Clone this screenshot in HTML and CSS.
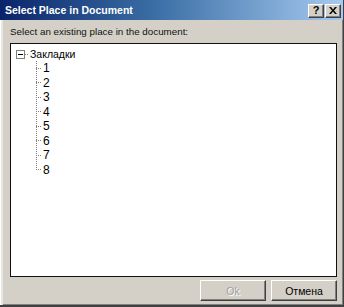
FILE: index.html
```html
<!DOCTYPE html>
<html>
<head>
<meta charset="utf-8">
<link rel="stylesheet" href="styles.css">
</head>
<body>
<div class="window">
  <div class="titlebar">
    <span class="title">Select Place in Document</span>
    <div class="tb-buttons">
      <span class="tb-btn">?</span>
      <span class="tb-btn close">
        <svg width="8" height="7" viewBox="0 0 8 7"><path d="M0 0h2l2 2.5L6 0h2L5 3.5 8 7H6L4 4.5 2 7H0l3-3.5z" fill="#000"/></svg>
      </span>
    </div>
  </div>
  <div class="body">
    <div class="label">Select an existing place in the document:</div>
    <div class="tree">
      <div class="root">
        <span class="pm"><span class="minus"></span></span><span class="hdash"></span><span class="root-text">Закладки</span>
      </div>
      <ul class="children">
        <li><span class="hdash short"></span>1</li>
        <li><span class="hdash short"></span>2</li>
        <li><span class="hdash short"></span>3</li>
        <li><span class="hdash short"></span>4</li>
        <li><span class="hdash short"></span>5</li>
        <li><span class="hdash short"></span>6</li>
        <li><span class="hdash short"></span>7</li>
        <li><span class="hdash short"></span>8</li>
      </ul>
    </div>
    <div class="buttons">
      <button class="btn" disabled>Ok</button>
      <button class="btn">Отмена</button>
    </div>
  </div>
</div>
</body>
</html>
```
FILE: styles.css
```css
* { box-sizing: border-box; }
html, body { margin: 0; padding: 0; }
body {
  width: 344px;
  height: 307px;
  overflow: hidden;
  font-family: "Liberation Sans", Arial, sans-serif;
  font-size: 10px;
  color: #000;
  background: #d4d0c8;
}
.window {
  width: 344px;
  height: 307px;
  display: flex;
  flex-direction: column;
  background: #d4d0c8;
  border-right: 1px solid #404040;
  border-bottom: 2px solid #404040;
  box-shadow: inset -1px -1px 0 #808080;
}
.titlebar {
  height: 20px;
  flex: 0 0 20px;
  display: flex;
  align-items: center;
  justify-content: space-between;
  padding: 0 2px 0 5px;
  background: linear-gradient(to right, #0a246a 0%, #3a6ea5 45%, #a6caf0 100%);
}
.title {
  color: #fff;
  font-weight: bold;
  font-size: 10.5px;
}
.tb-buttons { display: flex; gap: 1px; margin-top: 1px; }
.tb-btn {
  width: 16px;
  height: 14px;
  background: #d4d0c8;
  display: flex;
  align-items: center;
  justify-content: center;
  font-weight: bold;
  font-size: 11px;
  line-height: 1;
  border-top: 1px solid #fff;
  border-left: 1px solid #fff;
  border-right: 1px solid #404040;
  border-bottom: 1px solid #404040;
  box-shadow: inset -1px -1px 0 #808080;
}
.body {
  flex: 1;
  display: flex;
  flex-direction: column;
  padding: 5px 5px 2px 9px;
  border-left: 1px solid #fff;
  box-shadow: inset 2px 0 0 #e8e6e0;
}
.label {
  height: 18px;
  line-height: 14px;
  font-size: 9.8px;
  color: #111;
}
.tree {
  height: 234px;
  background: #fff;
  border: 1px solid #111;
  margin-right: 1px;
  padding: 3px 0 0 5px;
}
.root {
  display: flex;
  align-items: center;
  height: 14px;
  font-size: 10.5px;
}
.pm {
  width: 9px;
  height: 9px;
  border: 1px solid #808080;
  display: flex;
  align-items: center;
  justify-content: center;
  background: #fff;
}
.minus { width: 5px; height: 1px; background: #000; }
.hdash {
  width: 4px;
  height: 1px;
  margin: 0 1px 0 0;
  background-image: linear-gradient(to right, #808080 50%, transparent 50%);
  background-size: 2px 1px;
}
.root-text { line-height: 14px; }
.children {
  list-style: none;
  margin: 0;
  padding: 0 0 0 20px;
  background-image: repeating-linear-gradient(to bottom, #808080 0 1px, transparent 1px 2px);
  background-size: 1px calc(100% - 7px);
  background-repeat: no-repeat;
  background-position: 20px 0;
}
.children li {
  display: flex;
  align-items: center;
  height: 14.5px;
  line-height: 14px;
  font-size: 12px;
}
.children li .hdash.short { width: 6px; margin-right: 1px; }
.buttons {
  display: flex;
  justify-content: flex-end;
  gap: 5px;
  margin-top: 3px;
  padding-right: 1px;
}
.btn {
  width: 66px;
  height: 21px;
  padding: 0;
  font-family: "Liberation Sans", Arial, sans-serif;
  font-size: 10.5px;
  color: #000;
  background: #d4d0c8;
  border-top: 1px solid #fff;
  border-left: 1px solid #fff;
  border-right: 1px solid #404040;
  border-bottom: 1px solid #404040;
  box-shadow: inset -1px -1px 0 #808080;
  border-radius: 0;
}
.btn:disabled {
  color: #a0a0a0;
  text-shadow: 1px 1px 0 #fff;
}
```
